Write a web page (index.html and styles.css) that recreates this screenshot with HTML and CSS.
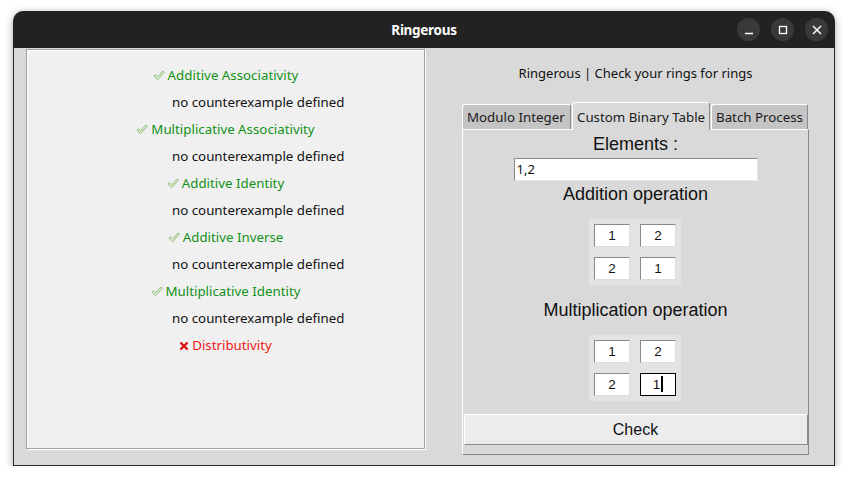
FILE: index.html
```html
<!DOCTYPE html>
<html>
<head>
<meta charset="utf-8">
<link rel="stylesheet" href="styles.css">
</head>
<body>
<div class="window">
  <div class="titlebar">
    <span class="title">Ringerous</span>
    <div class="controls">
      <span class="ctl"><svg width="10" height="10" viewBox="0 0 10 10"><path d="M1 8.5H9" stroke="#fff" stroke-width="1.5"/></svg></span>
      <span class="ctl"><svg width="10" height="10" viewBox="0 0 10 10"><rect x="1.5" y="1.5" width="7" height="7" fill="none" stroke="#fff" stroke-width="1.3"/></svg></span>
      <span class="ctl"><svg width="10" height="10" viewBox="0 0 10 10"><path d="M1 1L9 9M9 1L1 9" stroke="#fff" stroke-width="1.5"/></svg></span>
    </div>
  </div>
  <div class="body">
    <div class="results">
      <div class="row ok"><svg class="chk" width="12" height="11" viewBox="0 0 12 11"><path d="M0.8 6.2L2.6 4.6L4.6 6.8L10 0.9L11.4 2.2L4.6 9.8Z" fill="#d6ebc4" stroke="#93b985" stroke-width="0.9"/></svg>Additive Associativity</div>
      <div class="row sub">no counterexample defined</div>
      <div class="row ok"><svg class="chk" width="12" height="11" viewBox="0 0 12 11"><path d="M0.8 6.2L2.6 4.6L4.6 6.8L10 0.9L11.4 2.2L4.6 9.8Z" fill="#d6ebc4" stroke="#93b985" stroke-width="0.9"/></svg>Multiplicative Associativity</div>
      <div class="row sub">no counterexample defined</div>
      <div class="row ok"><svg class="chk" width="12" height="11" viewBox="0 0 12 11"><path d="M0.8 6.2L2.6 4.6L4.6 6.8L10 0.9L11.4 2.2L4.6 9.8Z" fill="#d6ebc4" stroke="#93b985" stroke-width="0.9"/></svg>Additive Identity</div>
      <div class="row sub">no counterexample defined</div>
      <div class="row ok"><svg class="chk" width="12" height="11" viewBox="0 0 12 11"><path d="M0.8 6.2L2.6 4.6L4.6 6.8L10 0.9L11.4 2.2L4.6 9.8Z" fill="#d6ebc4" stroke="#93b985" stroke-width="0.9"/></svg>Additive Inverse</div>
      <div class="row sub">no counterexample defined</div>
      <div class="row ok"><svg class="chk" width="12" height="11" viewBox="0 0 12 11"><path d="M0.8 6.2L2.6 4.6L4.6 6.8L10 0.9L11.4 2.2L4.6 9.8Z" fill="#d6ebc4" stroke="#93b985" stroke-width="0.9"/></svg>Multiplicative Identity</div>
      <div class="row sub">no counterexample defined</div>
      <div class="row bad"><svg class="crs" width="10" height="10" viewBox="0 0 10 10"><path d="M1.5 1.5L8.5 8.5M8.5 1.5L1.5 8.5" stroke="#e01010" stroke-width="2.4"/></svg>Distributivity</div>
    </div>
    <div class="side">
      <div class="heading">Ringerous | Check your rings for rings</div>
      <div class="notebook">
        <div class="tabs">
          <div class="tab">Modulo Integer</div>
          <div class="tab active">Custom Binary Table</div>
          <div class="tab">Batch Process</div>
        </div>
        <div class="page">
          <div class="label first">Elements :</div>
          <div class="entry">1,2</div>
          <div class="label">Addition operation</div>
          <div class="grid">
            <div class="cell">1</div><div class="cell">2</div>
            <div class="cell">2</div><div class="cell">1</div>
          </div>
          <div class="label mult">Multiplication operation</div>
          <div class="grid">
            <div class="cell">1</div><div class="cell">2</div>
            <div class="cell">2</div><div class="cell focus">1<span class="caret"></span></div>
          </div>
          <div class="button">Check</div>
        </div>
      </div>
    </div>
  </div>
</div>
</body>
</html>
```

FILE: styles.css
```css
html, body {
  margin: 0;
  padding: 0;
  background: #ffffff;
}
body {
  padding: 11px 0 0 13px;
  font-family: "Noto Sans", "DejaVu Sans", sans-serif;
}
.window {
  width: 822px;
  height: 455px;
  border-radius: 10px 10px 0 0;
  box-shadow: 0 2px 8px rgba(0,0,0,0.35);
  display: flex;
  flex-direction: column;
  overflow: hidden;
  background: #d9d9d9;
}
.titlebar {
  height: 37px;
  flex: none;
  background: #222222;
  display: flex;
  align-items: center;
  justify-content: center;
  position: relative;
}
.title {
  color: #ffffff;
  font-weight: bold;
  font-size: 13.5px;
  letter-spacing: -0.3px;
}
.controls {
  position: absolute;
  right: 7px;
  top: 7px;
  display: flex;
  gap: 11px;
}
.ctl {
  width: 23px;
  height: 23px;
  border-radius: 50%;
  background: #393939;
  display: flex;
  align-items: center;
  justify-content: center;
}
.body {
  flex: 1;
  display: flex;
  padding: 1px 0 0 13px;
  border-left: 1px solid #2a2a2a;
  border-right: 1px solid #2a2a2a;
  border-bottom: 1px solid #2a2a2a;
  box-sizing: border-box;
}
.results {
  width: 397px;
  flex: none;
  margin-left: -1px;
  background: #f0f0f0;
  border: 1px solid #a0a0a0;
  box-shadow: inset 1px 1px 0 #ffffff, 1px 1px 0 #ffffff;
  padding-top: 12px;
  height: 386px;
  font-size: 13.3px;
}
.row {
  height: 27px;
  line-height: 27px;
  display: flex;
  align-items: center;
  white-space: nowrap;
}
.row.ok {
  justify-content: center;
  color: #129018;
}
.row.bad {
  justify-content: center;
  color: #f01818;
}
.row.sub {
  color: #111111;
  padding-left: 145px;
}
.chk {
  margin-right: 3px;
  margin-top: -1px;
}
.crs {
  margin-right: 3px;
}
.side {
  flex: 1;
  display: flex;
  flex-direction: column;
  align-items: center;
}
.heading {
  font-size: 13px;
  color: #111;
  margin-top: 14px;
  height: 20px;
  line-height: 20px;
  margin-left: 12px;
}
.notebook {
  margin-top: 19px;
  margin-left: 12px;
  width: 347px;
}
.tabs {
  display: flex;
  align-items: flex-end;
  height: 27px;
  gap: 1px;
  position: relative;
  z-index: 1;
}
.tab {
  height: 25px;
  line-height: 25px;
  font-size: 13.3px;
  color: #1a1a1a;
  background: #c4c4c4;
  border-top: 1px solid #ffffff;
  border-left: 1px solid #ffffff;
  border-right: 1px solid #8a8a8a;
  border-radius: 3px 3px 0 0;
  padding: 0 4px;
  box-sizing: border-box;
  white-space: nowrap;
}
.tab:first-child { width: 109px; }
.tab.active {
  width: 138px;
  height: 28px;
  line-height: 28px;
  background: #d9d9d9;
  margin-bottom: -1px;
}
.tab:last-child { width: 97px; }
.page {
  height: 326px;
  border-top: 1px solid #ffffff;
  border-left: 1px solid #ffffff;
  border-right: 1px solid #8a8a8a;
  border-bottom: 1px solid #8a8a8a;
  box-sizing: border-box;
  display: flex;
  flex-direction: column;
  align-items: center;
  font-family: "Liberation Sans", Arial, sans-serif;
  color: #111;
}
.label {
  font-size: 18px;
  height: 22px;
  line-height: 22px;
}
.label.first { margin-top: 3px; }
.entry {
  margin-top: 3px;
  width: 244px;
  height: 23px;
  box-sizing: border-box;
  background: #ffffff;
  border-top: 1px solid #8a8a8a;
  border-left: 1px solid #8a8a8a;
  border-right: 1px solid #e8e8e8;
  border-bottom: 1px solid #e8e8e8;
  font-family: "Noto Sans", sans-serif;
  font-size: 13px;
  line-height: 21px;
  padding-left: 2px;
  margin-bottom: 2px;
}
.grid {
  margin-top: 14px;
  background: #e3e3e3;
  padding: 5px;
  display: grid;
  grid-template-columns: 36px 36px;
  grid-auto-rows: 23px;
  column-gap: 10px;
  row-gap: 10px;
  margin-left: -1px;
}
.label.mult { margin-top: 14px; }
.cell {
  background: #ffffff;
  border-top: 1px solid #8a8a8a;
  border-left: 1px solid #8a8a8a;
  border-right: 1px solid #dcdcdc;
  border-bottom: 1px solid #dcdcdc;
  box-sizing: border-box;
  text-align: center;
  font-size: 13.5px;
  line-height: 21px;
}
.cell.focus {
  border: 1px solid #000000;
}
.caret {
  display: inline-block;
  width: 2px;
  height: 16px;
  background: #000;
  vertical-align: -3px;
  margin-left: 1px;
}
.button {
  margin-top: 13px;
  width: 344px;
  height: 31px;
  box-sizing: border-box;
  background: #ececec;
  border-top: 1px solid #ffffff;
  border-left: 1px solid #ffffff;
  border-right: 1px solid #8a8a8a;
  border-bottom: 1px solid #8a8a8a;
  text-align: center;
  font-size: 16px;
  line-height: 29px;
}
```
